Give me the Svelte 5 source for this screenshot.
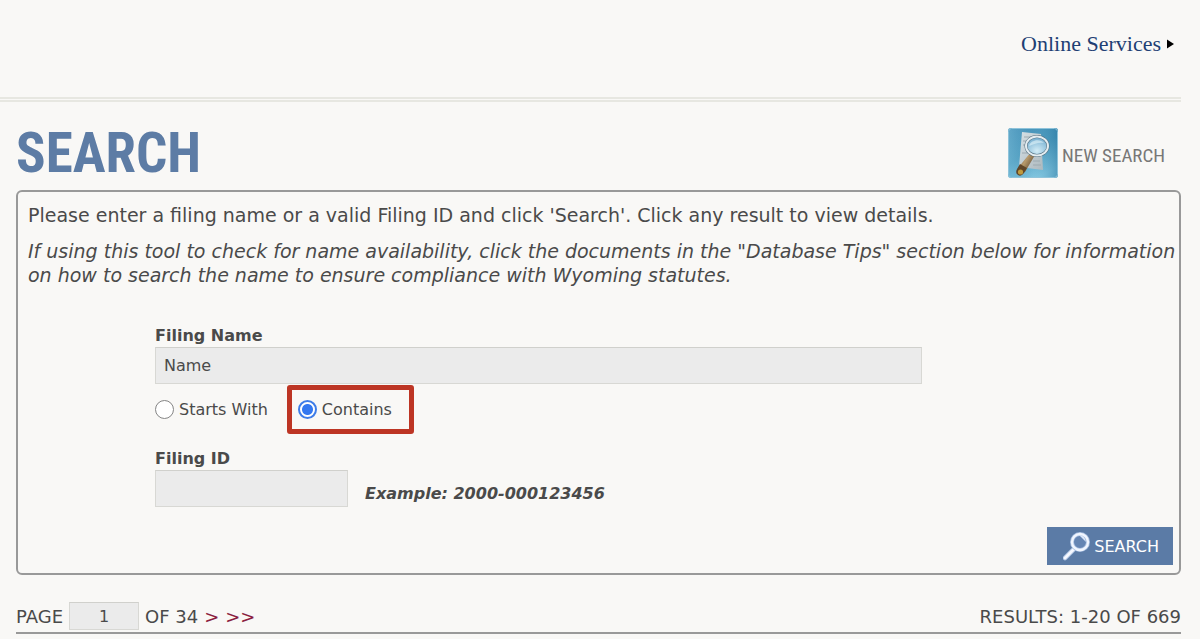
<script>
  let filingName = $state('Name');
  let filingId = $state('');
  let match = $state('contains');
  let page = $state('1');
</script>

<header>
  <a class="services" href="#services">
    Online Services
    <svg width="7" height="10" viewBox="0 0 7 10" aria-hidden="true"><path d="M0 0.5 7 5 0 9.5z" fill="#000" /></svg>
  </a>
</header>

<main>
  <div class="title">
    <h1>SEARCH</h1>
    <a class="new" href="#new">
      <svg width="52" height="52" viewBox="0 0 52 52" aria-hidden="true">
        <defs>
          <linearGradient id="tile" x1="0" y1="0" x2="0.6" y2="1">
            <stop offset="0" stop-color="#4590b8" />
            <stop offset="0.55" stop-color="#4f9dc0" />
            <stop offset="1" stop-color="#86c9e2" />
          </linearGradient>
          <linearGradient id="shade" x1="0" y1="0" x2="1" y2="0">
            <stop offset="0" stop-color="#8ccbe2" stop-opacity="0.4" />
            <stop offset="0.5" stop-color="#5aa5c5" stop-opacity="0" />
            <stop offset="1" stop-color="#1f6d98" stop-opacity="0.5" />
          </linearGradient>
          <linearGradient id="paper" x1="0" y1="0" x2="1" y2="1">
            <stop offset="0" stop-color="#d5e0e5" />
            <stop offset="1" stop-color="#aeb9be" />
          </linearGradient>
          <radialGradient id="glass" cx="0.5" cy="0.75" r="0.8">
            <stop offset="0" stop-color="#d3ecf6" />
            <stop offset="0.6" stop-color="#92c2dc" />
            <stop offset="1" stop-color="#639fc4" />
          </radialGradient>
          <linearGradient id="wood" x1="0" y1="0" x2="1" y2="0.7">
            <stop offset="0" stop-color="#4a3421" />
            <stop offset="0.5" stop-color="#b79a6c" />
            <stop offset="1" stop-color="#54402a" />
          </linearGradient>
        </defs>
        <rect x="1" y="1" width="50" height="50" rx="3" fill="url(#tile)" />
        <rect x="1" y="1" width="50" height="50" rx="3" fill="url(#shade)" />
        <rect x="1.5" y="1.5" width="49" height="49" rx="3" fill="none" stroke="#8fc3da" />
        <path d="M15 5 34 7 36 43 12 40z" fill="url(#paper)" />
        <path d="M17 10h12M16 14h9M16 18h4M15 26h8M26 34h7M26 38h8" stroke="#9daab0" stroke-width="1" />
        <path d="m24 25 4 3-10 17-7-4z" fill="url(#wood)" />
        <path d="m13 37 7 4-3 5q-3 4-6 2-3-2-1-6z" fill="#5f4528" />
        <circle cx="13.5" cy="45" r="2.6" fill="#c09a3e" />
        <ellipse cx="30" cy="19" rx="11" ry="9.5" fill="url(#glass)" stroke="#516d7e" stroke-width="3" />
        <ellipse cx="30" cy="19" rx="11" ry="9.5" fill="none" stroke="#e4edf1" stroke-width="2" />
        <path d="M22 19c1-6 11-8 15-3-6-1-9 1-15 3z" fill="#dceff7" opacity="0.65" />
      </svg>
      <span>NEW SEARCH</span>
    </a>
  </div>

  <form class="panel" onsubmit={(e) => e.preventDefault()}>
    <p>Please enter a filing name or a valid Filing ID and click 'Search'. Click any result to view details.</p>
    <p class="note">If using this tool to check for name availability, click the documents in the "Database Tips" section below for information on how to search the name to ensure compliance with Wyoming statutes.</p>

    <div class="fields">
      <label class="caption" for="filing-name">Filing Name</label>
      <input class="box wide" id="filing-name" type="text" bind:value={filingName} />
      <div class="choices">
        <label><input type="radio" name="match" value="starts" bind:group={match} />Starts With</label>
        <label class="marked"><input type="radio" name="match" value="contains" bind:group={match} />Contains</label>
      </div>
      <label class="caption" for="filing-id">Filing ID</label>
      <div class="id-row">
        <input class="box" id="filing-id" type="text" bind:value={filingId} />
        <span class="example">Example: 2000-000123456</span>
      </div>
    </div>

    <div class="actions">
      <button type="submit">
        <svg width="28" height="30" viewBox="0 0 28 30" aria-hidden="true">
          <path d="M2 27 12 17" stroke="#a9bfe0" stroke-width="4.6" stroke-linecap="round" />
          <path d="M2 27 12 17" stroke="#f5f8ff" stroke-width="3" stroke-linecap="round" />
          <circle cx="17" cy="11" r="8" fill="#6585b3" stroke="#a9bfe0" stroke-width="4" />
          <circle cx="17" cy="11" r="8" fill="none" stroke="#f1f6ff" stroke-width="2.4" />
          <path d="M16 4q6 0 7 7l-3-3z" fill="#dbe7fa" />
        </svg>
        SEARCH
      </button>
    </div>
  </form>

  <nav class="pager">
    <div class="pages">
      <label for="page">PAGE</label>
      <input class="box" id="page" type="text" bind:value={page} />
      <span>OF 34</span>
      <a href="#next">&gt;</a>
      <a href="#last">&gt;&gt;</a>
    </div>
    <span>RESULTS: 1-20 OF 669</span>
  </nav>
</main>

<style>
  :global(body) {
    background: #f9f8f6;
    color: #4a4a4a;
    font-family: Verdana, "DejaVu Sans", sans-serif;
    font-size: 16px;
  }
  header {
    display: flex;
    justify-content: flex-end;
    box-sizing: border-box;
    height: 102px;
    margin-right: 19px;
    padding: 30px 7px 0 0;
    border-bottom: 5px double #e7e7e1;
  }
  a {
    text-decoration: none;
  }
  .services {
    display: flex;
    align-items: center;
    gap: 6px;
    height: 28px;
    color: #1f3f74;
    font-family: "Liberation Serif", serif;
    font-size: 22px;
  }
  main {
    padding: 21px 19px 0 16px;
  }
  .title {
    display: flex;
    justify-content: space-between;
    align-items: center;
    height: 60px;
  }
  h1 {
    margin: 0;
    color: #5d7ca5;
    font: bold 55px/60px "Arial Narrow", "Roboto Condensed", Roboto, sans-serif;
  }
  .new {
    display: flex;
    align-items: center;
    gap: 3px;
    padding-right: 16px;
    color: #777;
    font: 19px "Arial Narrow", "Roboto Condensed", Roboto, sans-serif;
  }
  .new svg {
    display: block;
  }
  .new span {
    padding-top: 4px;
  }
  .panel {
    margin-top: 7px;
    padding: 11px 3px 8px 10px;
    border: 2px solid #999;
    border-radius: 6px;
  }
  p {
    margin: 0;
    font-size: 19px;
    line-height: 24px;
  }
  .note {
    margin-top: 12px;
    font-style: italic;
  }
  .fields {
    margin: 37px 254px 0 127px;
  }
  .caption {
    display: block;
    font-weight: bold;
    line-height: 23px;
  }
  .box {
    display: block;
    box-sizing: border-box;
    width: 193px;
    height: 37px;
    margin: 0;
    padding: 0 8px;
    border: 1px solid #d8d8d4;
    border-top-color: #d0d0cc;
    background: #ebebeb;
    color: #4a4a4a;
    font: inherit;
  }
  .wide {
    width: 100%;
  }
  .choices {
    display: flex;
    gap: 19px;
    height: 49px;
    margin: 1px 0 13px;
  }
  .choices label {
    display: flex;
    align-items: center;
    gap: 5px;
  }
  .choices .marked {
    padding: 0 17px 0 6px;
    border: 5px solid #bd3524;
    border-radius: 3px;
  }
  input[type="radio"] {
    appearance: none;
    box-sizing: border-box;
    width: 19px;
    height: 19px;
    margin: 0;
    border: 1px solid #858585;
    border-radius: 50%;
    background: #fff;
  }
  input[type="radio"]:checked {
    border: 2px solid #3d7ce8;
    background: radial-gradient(circle, #3478f0 5px, #fff 6px);
  }
  .id-row {
    display: flex;
    align-items: center;
    gap: 17px;
  }
  .example {
    padding-top: 9px;
    font-weight: bold;
    font-style: italic;
  }
  .actions {
    display: flex;
    justify-content: flex-end;
    margin: 20px 3px 0 0;
  }
  button {
    display: flex;
    align-items: center;
    gap: 3px;
    height: 38px;
    padding: 0 14px 0 16px;
    border: 0;
    background: #5b7ba6;
    color: #fff;
    font: inherit;
  }
  .pager {
    display: flex;
    justify-content: space-between;
    align-items: center;
    height: 28px;
    margin-top: 27px;
    padding-bottom: 2px;
    border-bottom: 2px solid #999;
    font-size: 18px;
  }
  .pages {
    display: flex;
    align-items: center;
    gap: 6px;
  }
  .pages .box {
    width: 70px;
    height: 28px;
    text-align: center;
    font-size: 16px;
  }
  .pages a {
    color: #8b1e3f;
  }
</style>
